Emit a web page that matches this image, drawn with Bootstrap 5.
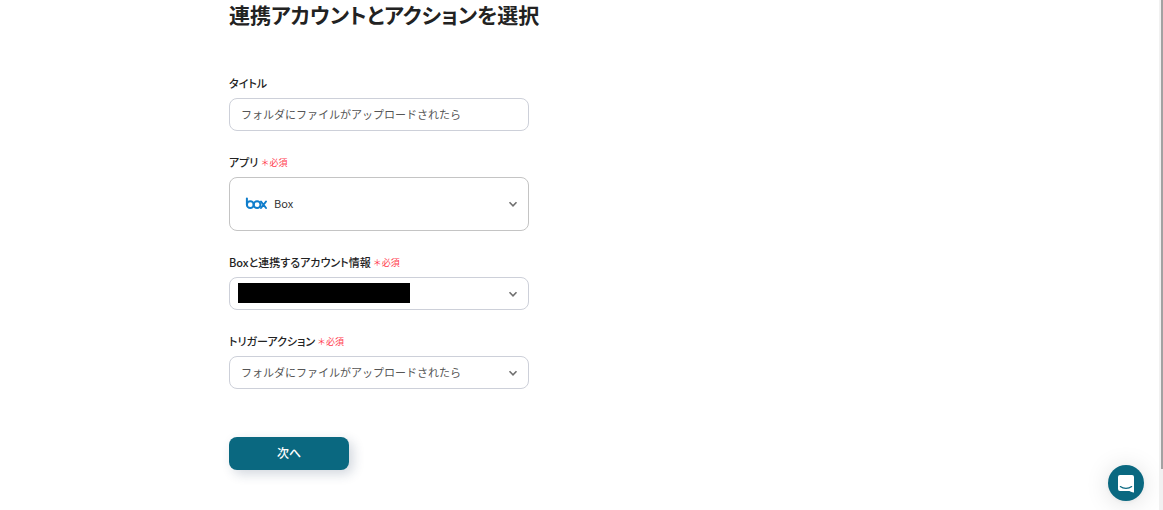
<!DOCTYPE html>
<html lang="ja">
<head>
<meta charset="utf-8">
<meta name="viewport" content="width=device-width, initial-scale=1">
<title>連携アカウントとアクションを選択</title>
<link href="https://cdn.jsdelivr.net/npm/bootstrap@5.3.0/dist/css/bootstrap.min.css" rel="stylesheet">
<script src="https://cdn.jsdelivr.net/npm/bootstrap@5.3.0/dist/js/bootstrap.bundle.min.js" defer></script>
<style>
  body { font-family: "Noto Sans CJK JP", sans-serif; font-size: 11px; color: #222; background: #fff; padding-right: 4px; }
  .page-body { max-width: 701px; padding-bottom: 40px; }
  .page-title { font-size: 21px; line-height: 28px; margin-bottom: 47px; font-weight: 600; font-feature-settings: "palt"; }
  .setup-form { max-width: 300px; }
  .field { margin-bottom: 23px; }
  .field-head { height: 16px; font-size: 11px; line-height: 16px; margin-bottom: 7px; font-weight: 500; }
  .head-text { font-feature-settings: "palt"; }
  .required-note { font-size: 9px; line-height: 18px; color: #ff3b4e; font-weight: 400; margin-left: 2px; }
  .field .form-control, .field .form-select {
    height: 33px; padding: 0 11px 2px; font-size: 11px; line-height: 16px; color: #555;
    border: 1px solid #cdd0d9; border-radius: 8px;
  }
  .field .form-select {
    padding-right: 32px;
    background-image: url("data:image/svg+xml,%3Csvg xmlns='http://www.w3.org/2000/svg' viewBox='0 0 10 10'%3E%3Cpath d='M1.5 3.3 5 6.8 8.5 3.3' fill='none' stroke='%23707070' stroke-width='1.6'/%3E%3C/svg%3E");
    background-size: 10px 10px; background-position: right 10px center;
  }
  .field .app-select { height: 54px; padding: 0 32px 2px 44px; color: #333; border-color: #c4c4c4; }
  .app-logo { left: 16px; width: 23px; height: 14px; }
  .redacted { left: 9px; top: 6px; width: 172px; height: 20px; background: #000; }
  .next-btn {
    width: 120px; height: 33px; margin-top: 48px; padding: 0 0 2px; font-size: 12px; line-height: 16px; font-weight: 500;
    color: #fff; background: #0a6880; border-radius: 8px; box-shadow: 4px 4px 12px rgba(30,55,90,.2);
  }
  .next-btn:hover { color: #fff; background: #085569; }
  .chat-btn { right: 19px; bottom: 9px; width: 36px; height: 36px; background: #0a6880; box-shadow: 0 1px 5px rgba(0,0,0,.06), 0 2px 24px rgba(0,0,0,.13); }
  .scroll-track { width: 4px; background: #f1f1f1; }
  .scroll-thumb { width: 2px; height: 92%; background: #a2a2a2; }
</style>
</head>
<body>
<main class="page-body mx-auto">
  <h1 class="page-title">連携アカウントとアクションを選択</h1>
  <form class="setup-form">
    <div class="field">
      <label class="field-head d-flex" for="title"><span class="head-text">タイトル</span></label>
      <input class="form-control" id="title" type="text" value="フォルダにファイルがアップロードされたら">
    </div>
    <div class="field">
      <label class="field-head d-flex" for="app"><span class="head-text">アプリ</span><span class="required-note">＊必須</span></label>
      <div class="position-relative d-flex align-items-center">
        <select class="form-select app-select" id="app"><option>Box</option></select>
        <svg class="app-logo position-absolute pe-none" viewBox="0 0 23 14" fill="none" stroke="#0f7dcb" stroke-width="2" stroke-linecap="round" aria-hidden="true">
          <path d="M1.900 1.600v6"/><circle cx="5.300" cy="7.700" r="3.400"/><circle cx="12.100" cy="7.700" r="3.400"/>
          <path d="M16 4.500l5 6.500M21 4.500l-5 6.500"/>
        </svg>
      </div>
    </div>
    <div class="field">
      <label class="field-head d-flex" for="account"><span class="head-text">Boxと連携するアカウント情報</span><span class="required-note">＊必須</span></label>
      <div class="position-relative">
        <select class="form-select" id="account"><option></option></select>
        <span class="redacted position-absolute pe-none"></span>
      </div>
    </div>
    <div class="field mb-0">
      <label class="field-head d-flex" for="action"><span class="head-text">トリガーアクション</span><span class="required-note">＊必須</span></label>
      <select class="form-select" id="action"><option>フォルダにファイルがアップロードされたら</option></select>
    </div>
    <button class="btn next-btn border-0 d-block" type="button">次へ</button>
  </form>
</main>
<button class="btn chat-btn rounded-circle border-0 p-0 position-fixed d-flex align-items-center justify-content-center" type="button" aria-label="チャット">
  <svg width="16" height="19" viewBox="0 0 16 19" aria-hidden="true">
    <path fill="#fff" d="M2 1h12a2 2 0 0 1 2 2v15.600s-2.600-.7-4.600-1.600H2a2 2 0 0 1-2-2V3a2 2 0 0 1 2-2z"/>
    <path d="M2.300 12.500c3.200 2.500 8.200 2.500 11.400 0" fill="none" stroke="#0a6880" stroke-width="1.100" stroke-linecap="round"/>
  </svg>
</button>
<div class="scroll-track position-fixed top-0 end-0 h-100" aria-hidden="true"><div class="scroll-thumb ms-auto"></div></div>
</body>
</html>
